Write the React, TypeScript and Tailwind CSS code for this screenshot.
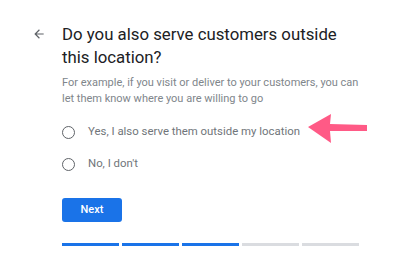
import React from "react";

export default function App() {
  const segs = [true, true, true, false, false];
  return (
    <div className="w-[404px] h-[267px] bg-white overflow-hidden" style={{ fontFamily: "Roboto, Arial, sans-serif" }}>
      <div className="flex pt-[23px]">
        <div className="w-[62px] flex justify-end pr-[16px] pt-[3px]">
          <svg width="14" height="14" viewBox="0 0 24 24" className="mt-[1px]">
            <path d="M20 11H7.83l5.59-5.59L12 4l-8 8 8 8 1.41-1.41L7.83 13H20v-2z" fill="#5f6368" />
          </svg>
        </div>
        <div className="flex flex-col">
          <h1 className="text-[16.8px] leading-[23px] text-[#202124] w-[285px]">
            Do you also serve customers outside this location?
          </h1>
          <p className="mt-[6px] text-[11px] leading-[16px] text-[#80868b] w-[310px]">
            For example, if you visit or deliver to your customers, you can let them know where you are willing to go
          </p>
          <div className="mt-[18px] flex flex-col gap-[18px]">
            <div className="relative flex items-center gap-[13px] h-[14px]">
              <span className="w-[13px] h-[13px] rounded-full border-[1.5px] border-[#5f6368]" />
              <span className="text-[11.4px] text-[#70757a]">Yes, I also serve them outside my location</span>
              <svg className="absolute left-[244px] top-[-12px]" width="62" height="32" viewBox="0 0 62 32">
                <path d="M2 14 L25 1 L24 11 L61 12 L61 18 L24 18 L25 30 Z" fill="#ff5a86" />
              </svg>
            </div>
            <div className="flex items-center gap-[13px] h-[14px]">
              <span className="w-[13px] h-[13px] rounded-full border-[1.5px] border-[#5f6368]" />
              <span className="text-[11.4px] text-[#70757a]">No, I don't</span>
            </div>
          </div>
          <button className="mt-[27px] w-[60px] h-[24px] rounded-[3px] bg-[#1a73e8] text-white text-[11px] font-medium">
            Next
          </button>
          <div className="mt-[21px] flex gap-[3px] w-[297px]">
            {segs.map((on, i) => (
              <div key={i} className={on ? "flex-1 h-[3px] bg-[#1a73e8]" : "flex-1 h-[3px] bg-[#dadce0]"} />
            ))}
          </div>
        </div>
      </div>
    </div>
  );
}
